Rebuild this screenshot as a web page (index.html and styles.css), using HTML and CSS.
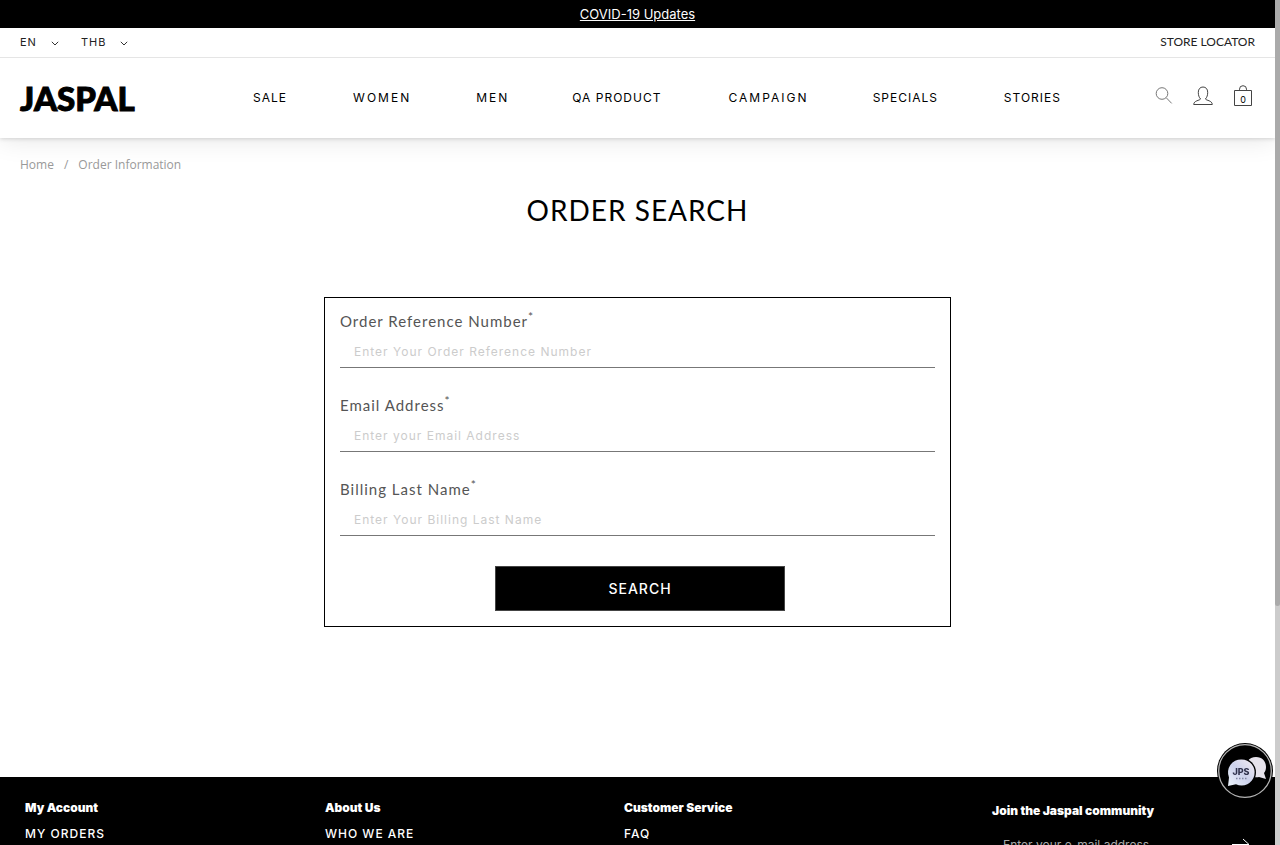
FILE: index.html
```html
<!DOCTYPE html>
<html lang="en">
<head>
<meta charset="utf-8">
<title>Order Search | JASPAL</title>
<link rel="stylesheet" href="styles.css">
</head>
<body>
<div class="page">
  <div class="notice"><a href="#">COVID-19 Updates</a></div>

  <header class="header">
    <div class="utility">
      <div class="switchers">
        <button class="switcher" type="button">EN
          <svg class="chevron" viewBox="0 0 8 5"><path d="M.8.8 4 4 7.2.8"/></svg>
        </button>
        <button class="switcher" type="button">THB
          <svg class="chevron" viewBox="0 0 8 5"><path d="M.8.8 4 4 7.2.8"/></svg>
        </button>
      </div>
      <a class="locator" href="#">STORE LOCATOR</a>
    </div>
    <div class="masthead">
      <a class="logo" href="#">JASPAL</a>
      <nav class="nav">
        <a href="#">SALE</a>
        <a class="wide" href="#">WOMEN</a>
        <a class="wide" href="#">MEN</a>
        <a href="#">QA PRODUCT</a>
        <a class="wide" href="#">CAMPAIGN</a>
        <a href="#">SPECIALS</a>
        <a href="#">STORIES</a>
      </nav>
      <div class="tools">
        <a href="#" aria-label="Search">
          <svg width="18" height="20" viewBox="0 0 18 20"><circle cx="7" cy="7.5" r="5.8"/><path d="m11.3 11.8 5.4 5.6"/></svg>
        </a>
        <a href="#" aria-label="Account">
          <svg class="dark" width="20" height="20" viewBox="0 0 20 20"><path d="M7.6 13C6 11.500 5.300 9 5.300 6.300 5.300 3 7.200 1 10 1s4.700 2 4.700 5.300c0 2.700-.7 5.200-2.300 6.700 1 1.600 6.700 1.400 6.900 5.500H.7C.9 14.400 6.600 14.600 7.600 13z"/></svg>
        </a>
        <a class="bag" href="#" aria-label="Bag">
          <svg class="dark" width="20" height="22" viewBox="0 0 20 22"><path d="M1.500 5.500h17v15h-17zM6.500 5.500V4.200a3.500 3.500 0 0 1 7 0v1.300"/></svg>
          <span class="count">0</span>
        </a>
      </div>
    </div>
  </header>

  <main class="main">
    <nav class="crumbs"><a href="#">Home</a><span>/</span><a href="#">Order Information</a></nav>
    <h1 class="title">ORDER SEARCH</h1>
    <form class="search-form">
      <div class="field">
        <label for="ref">Order Reference Number<sup>*</sup></label>
        <input id="ref" type="text" placeholder="Enter Your Order Reference Number">
      </div>
      <div class="field">
        <label for="email">Email Address<sup>*</sup></label>
        <input id="email" type="email" placeholder="Enter your Email Address">
      </div>
      <div class="field">
        <label for="last">Billing Last Name<sup>*</sup></label>
        <input id="last" type="text" placeholder="Enter Your Billing Last Name">
      </div>
      <div class="actions"><button class="submit" type="button">SEARCH</button></div>
    </form>
  </main>

  <footer class="footer">
    <section class="links"><h2>My Account</h2><a href="#">MY ORDERS</a></section>
    <section class="links"><h2>About Us</h2><a href="#">WHO WE ARE</a></section>
    <section class="links"><h2>Customer Service</h2><a href="#">FAQ</a></section>
    <section class="join">
      <h2><label for="news">Join the Jaspal community</label></h2>
      <div class="join-row">
        <input id="news" type="email" placeholder="Enter your e-mail address">
        <button type="button" aria-label="Subscribe">
          <svg width="18" height="14" viewBox="0 0 18 14"><path d="M0 6.500h17M11 1l6 5.500-6 5.500"/></svg>
        </button>
      </div>
    </section>
  </footer>
</div>

<button class="chat" type="button" aria-label="Chat">
  <svg width="56" height="56" viewBox="0 0 56 56">
    <defs><linearGradient id="bubble" x1="1" y1="0" x2="0" y2="1"><stop offset="0" stop-color="#f6eef3"/><stop offset=".5" stop-color="#ccd1eb"/><stop offset="1" stop-color="#edf4fc"/></linearGradient></defs>
    <circle cx="28" cy="28" r="28" fill="#000"/>
    <circle cx="28" cy="28" r="26.300" fill="none" stroke="#b5b5b5" stroke-width="1.300"/>
    <path fill="#e6e2eb" d="M39 14c6 0 10 4 10 10 0 3-1 5-2 6l2 6-7-2c-4 1-10-1-12-6-3-8 2-14 9-14z"/>
    <circle cx="24.500" cy="29.500" r="14.500" fill="#000"/>
    <path fill="url(#bubble)" d="M24.500 16.500a13 13 0 1 1-5.500 24.700L11 43l1-8.500a13 13 0 0 1 12.500-18z"/>
    <text class="chat-name" x="24" y="32" text-anchor="middle">JPS</text>
    <path stroke="#8388a5" stroke-width="1.500" stroke-dasharray="1.500 1.500" d="M19 35.500h11"/>
  </svg>
</button>
<div class="scrollbar"><div class="thumb"></div></div>
</body>
</html>
```
FILE: styles.css
```css
* { box-sizing: border-box; }
body {
  margin: 0;
  background: #fff;
  color: #000;
  font: 12px/20px Inter, "Liberation Sans", sans-serif;
}
a { color: inherit; text-decoration: none; }
button { padding: 0; border: 0; background: none; color: inherit; font: inherit; cursor: pointer; }
input { font: inherit; }
h1, h2 { margin: 0; }
svg { display: block; fill: none; stroke: #777; }

.page {
  display: flex;
  flex-direction: column;
  height: 100vh;
  padding-right: 5px;
  overflow: hidden;
}

.notice { padding: 4px 0; background: #000; color: #fff; text-align: center; font-size: 13px; }
.notice a { text-decoration: underline; }

.header { position: relative; box-shadow: 0 2px 24px rgba(0, 0, 0, .1), 0 1px 4px rgba(0, 0, 0, .14); }
.utility {
  display: flex;
  justify-content: space-between;
  padding: 4px 20px 5px;
  border-bottom: 1px solid #e5e5e5;
  color: #222;
  font-size: 11px;
}
.switchers { display: flex; gap: 22px; }
.switcher { display: flex; align-items: center; gap: 14px; letter-spacing: 1px; }
.chevron { width: 8px; height: 5px; margin-top: 2px; stroke: #333; }
.locator { font: 12px/20px Lato, sans-serif; }

.masthead { display: flex; align-items: center; height: 80px; padding: 0 22px 0 20px; }
.logo { width: 233px; font: 900 33px/40px Lato, sans-serif; -webkit-text-stroke: 1px #000; }
.nav {
  display: grid;
  grid-template-columns: 100fr 123fr 96fr 156fr 144fr 131fr 151fr;
  flex: 1;
  letter-spacing: 1px;
}
.wide { letter-spacing: 2px; }
.tools { display: flex; align-items: center; gap: 20px; padding-bottom: 4px; }
.dark { stroke: #444; }
.bag { position: relative; }
.count { position: absolute; inset: 6px 0 0; text-align: center; font-size: 9px; line-height: 18px; }

.main { flex: none; padding: 17px 20px 150px; }
.crumbs { display: flex; gap: 10px; color: #999; font: 12px/20px "Open Sans", sans-serif; }
.title { padding: 15px 0 67px; text-align: center; font: 400 28px/40px Lato, sans-serif; letter-spacing: 1px; }
.search-form {
  width: 627px;
  max-width: 100%;
  margin: 0 auto;
  padding: 13px 15px 15px;
  border: 1px solid #000;
}
.field { display: flex; flex-direction: column; margin-bottom: 27px; }
.field label { color: #555; font: 15px/20px Lato, sans-serif; letter-spacing: 1px; }
.field sup { font-size: 12px; line-height: 0; }
.field input {
  height: 37px;
  padding: 4px 14px 0;
  border: 0;
  border-bottom: 1px solid #777;
  outline: 0;
  letter-spacing: 1px;
}
.field input::placeholder { color: #ccc; }
.actions { padding: 3px 0 0 5px; }
.submit {
  display: block;
  width: 290px;
  height: 45px;
  margin: 0 auto;
  border: 1px solid #444;
  background: #000;
  color: #fff;
  font-size: 14px;
  font-weight: 500;
  letter-spacing: 1px;
}

.footer {
  display: grid;
  grid-template-columns: 300fr 299fr 368fr 258fr;
  flex: 1 0 auto;
  padding: 21px 25px 0;
  background: #000;
  color: #fff;
}
.footer h2 { font-size: 12px; font-weight: 900; line-height: 20px; }
.links a { display: block; padding-top: 6px; font-weight: 500; letter-spacing: 1px; }
.join { padding-top: 3px; }
.join-row { display: flex; align-items: center; padding: 14px 0 0 11px; }
.join-row input { flex: 1; min-width: 0; height: 20px; padding: 0; border: 0; background: none; outline: 0; }
.join-row input::placeholder { color: #aaa; }
.join-row svg { stroke: #fff; }

.chat { position: fixed; right: 7px; bottom: 46px; }
.chat svg { stroke: none; }
.chat-name { fill: #30324c; font: 800 9px Inter, sans-serif; }
.scrollbar { position: fixed; top: 0; right: 0; bottom: 0; width: 5px; background: #ccc; }
.thumb { height: 71.7%; border-radius: 0 0 3px 3px; background: #aaa; }
```
